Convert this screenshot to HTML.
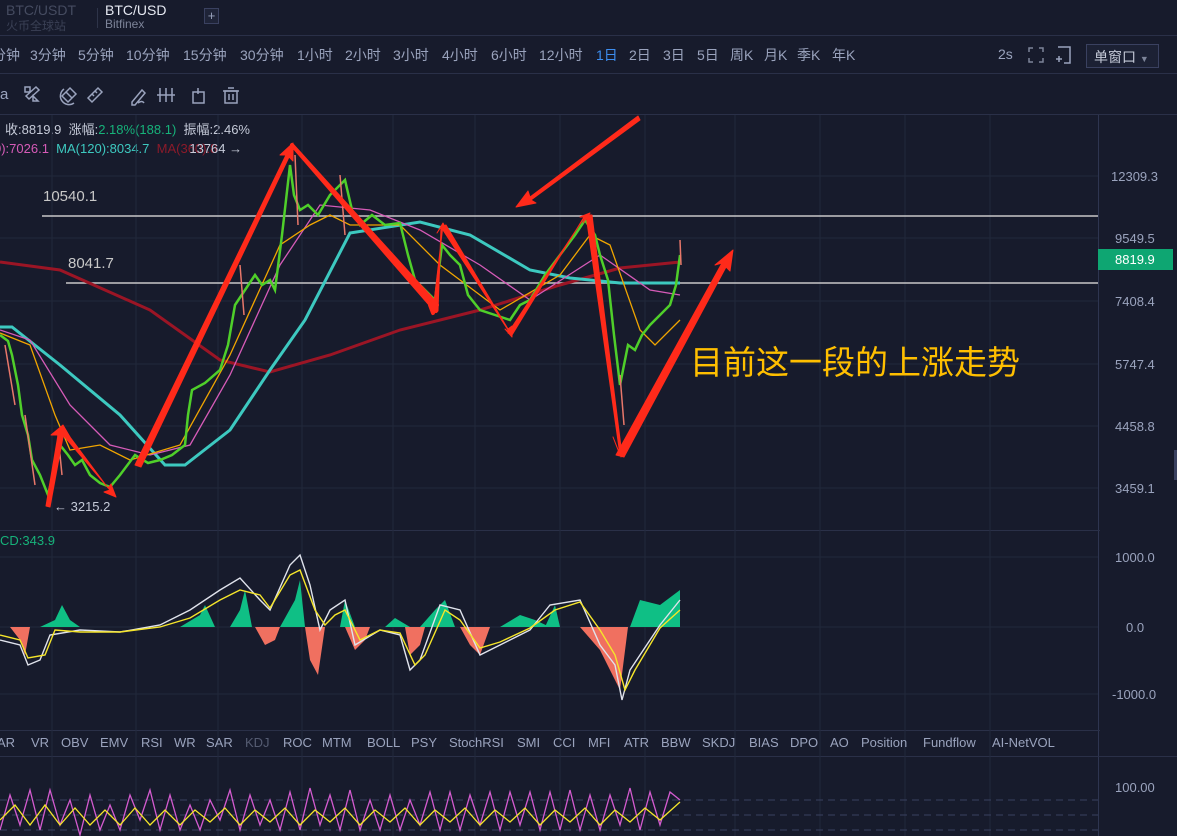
<!DOCTYPE html>
<html><head><meta charset="utf-8">
<style>
body{margin:0;width:1177px;height:836px;overflow:hidden;background:#171b2c;font-family:"Liberation Sans","Noto Sans CJK SC",sans-serif;color:#9aa3bd;position:relative}
.a{position:absolute;white-space:nowrap}
.hl{position:absolute;left:0;width:1177px;height:1px;background:#2a3048}
.p span{position:absolute;top:0;font-size:14px}
.t span{position:absolute;top:0;font-size:13px}
</style></head><body>
<div class="a" style="left:6px;top:2px;font-size:14px;color:#454b60">BTC/USDT</div>
<div class="a" style="left:6px;top:17px;font-size:12px;color:#3a4055">火币全球站</div>
<div class="a" style="left:97px;top:8px;width:1px;height:20px;background:#2e3449"></div>
<div class="a" style="left:105px;top:2px;font-size:14px;color:#e6e9f2">BTC/USD</div>
<div class="a" style="left:105px;top:17px;font-size:12px;color:#7d8499">Bitfinex</div>
<div class="a" style="left:204px;top:8px;width:13px;height:14px;border:1px solid #3a4160;background:#1f2438;color:#9aa3bd;font-size:13px;line-height:14px;text-align:center">+</div>
<div class="hl" style="top:35px"></div>
<div class="a p" style="left:0;top:45px;width:900px;height:20px">
<span style="left:-8px">分钟</span><span style="left:30px">3分钟</span><span style="left:78px">5分钟</span><span style="left:126px">10分钟</span><span style="left:183px">15分钟</span><span style="left:240px">30分钟</span><span style="left:297px">1小时</span><span style="left:345px">2小时</span><span style="left:393px">3小时</span><span style="left:442px">4小时</span><span style="left:491px">6小时</span><span style="left:539px">12小时</span><span style="left:596px;color:#3d8ef0">1日</span><span style="left:629px">2日</span><span style="left:663px">3日</span><span style="left:697px">5日</span><span style="left:730px">周K</span><span style="left:764px">月K</span><span style="left:797px">季K</span><span style="left:832px">年K</span></div>
<div class="a" style="left:998px;top:46px;font-size:14px">2s</div>
<svg class="a" style="left:1028px;top:47px" width="16" height="16" stroke="#7d8499" stroke-width="1.5" fill="none"><path d="M1 5V1h4M11 1h4v4M15 11v4h-4M5 15H1v-4"/></svg>
<svg class="a" style="left:1054px;top:46px" width="18" height="18" stroke="#9aa3bd" stroke-width="1.5" fill="none"><path d="M4 1h12v16H10M2 13h6M5 10v6"/></svg>
<div class="a" style="left:1086px;top:44px;width:73px;height:24px;border:1px solid #3a4160;background:#1c2134;font-size:14px;line-height:24px;color:#c5cad8;padding-left:7px;box-sizing:border-box">单窗口 <span style="font-size:9px;color:#7d8499">▼</span></div>
<div class="hl" style="top:73px"></div>
<div class="a" style="left:0;top:86px;font-size:15px;color:#9aa3bd">a</div>
<svg class="a" style="left:20px;top:84px" width="230" height="22" fill="none" stroke="#9aa3bd" stroke-width="1.5">
<path d="M5 3h5v5H5zM13 12l5 5h-5zM6 12l10-9 3 3-10 9z"/>
<path d="M42 12l8-8 6 6-8 8zM46 8l6 6M44 5a8 8 0 0 0 10 14"/>
<path d="M68 14l10-10 4 4-10 10zM72 10l2 2M75 7l2 2"/>
<path d="M112 18l10-12 3 3-10 12h-3z M118 19q4-3 6 0"/><path d="M140 4v14M146 4v14M152 4v14M137 11h18"/><rect x="173" y="8" width="11" height="11"/><path d="M178 4v6"/><rect x="205" y="7" width="12" height="12"/><path d="M203 7h16M208 4h6M209 10v6M213 10v6"/>
</svg>
<div class="hl" style="top:114px"></div>
<div class="a" style="left:5px;top:119px;font-size:13px;color:#c5cad8">收:8819.9&nbsp; 涨幅:<span style="color:#17b27a">2.18%(188.1)</span>&nbsp; 振幅:2.46%</div>
<div class="a" style="left:-6px;top:141px;font-size:13px"><span style="color:#d65bb8">0):7026.1</span>&nbsp; <span style="color:#3dc9c0">MA(120):8034.7</span>&nbsp; <span style="color:#8b1a2a">MA(360):8</span><span style="color:#c5cad8;margin-left:-28px">13764 →</span></div>
<div class="a" style="left:1098px;top:115px;width:1px;height:721px;background:#2e3550"></div>
<div class="hl" style="top:530px;width:1100px"></div>
<div class="hl" style="top:730px;width:1100px"></div>
<div class="hl" style="top:756px;width:1177px"></div>
<svg class="a" style="left:0;top:115px" width="1098" height="721">
<g stroke="#22283b" stroke-width="1">
<path d="M52 0V721M136 0V721M218 0V721M302 0V721M393 0V721M475 0V721M560 0V721M645 0V721M735 0V721M820 0V721M905 0V721M990 0V721"/>
<path d="M0 61H1098M0 123H1098M0 186H1098M0 249H1098M0 311H1098M0 373H1098M0 442H1098M0 512H1098M0 579H1098"/>
</g>
<path d="M42 101H1098M66 168H1098" stroke="#c8c8c8" stroke-width="1.5"/>
<path d="M0 147L60 155L150 195L220 245L270 257L330 240L400 215L480 195L560 170L620 153L680 147" stroke="#9b1525" stroke-width="3" fill="none"/>
<path d="M0 212L12 212L60 250L120 300L165 350L185 350L230 315L270 255L305 205L350 118L420 107L470 120L530 155L570 163L620 168L680 168" stroke="#3dc9c0" stroke-width="3" fill="none"/>
<path d="M0 215L30 225L70 290L110 330L150 340L190 330L230 260L280 150L320 90L370 95L420 115L480 150L530 185L600 140L650 175L680 180" stroke="#d65bb8" stroke-width="1.3" fill="none"/>
<path d="M0 218L30 230L55 300L70 335L100 330L130 345L180 330L230 240L280 130L310 110L330 100L350 110L400 110L440 150L500 195L560 160L590 120L610 130L640 215L655 230L680 205" stroke="#f0a500" stroke-width="1.3" fill="none"/>
<path d="M0 220L8 226L12 240L18 270L22 300L28 320L32 345L40 360L48 380L55 350L60 330L68 340L75 350L82 345L90 360L100 368L110 372L120 360L135 340L148 348L160 345L172 340L185 330L188 300L192 275L205 268L220 255L228 230L235 190L245 175L255 160L262 170L270 165L275 175L282 120L290 50L294 80L300 95L308 90L318 100L330 80L345 65L352 95L360 110L372 100L385 110L400 108L408 140L415 165L425 175L435 185L442 130L450 140L460 150L468 180L480 195L495 200L510 205L520 190L530 185L545 160L560 140L575 120L585 105L595 120L600 140L608 165L614 220L620 270L624 250L628 230L635 235L642 220L650 210L660 200L670 190L676 170L680 140" stroke="#4fcf2a" stroke-width="2.5" fill="none"/>
<path d="M5 230L15 290M25 300L35 370M58 320L62 360M240 150L244 200M295 40L298 110M340 60L345 120M620 260L624 310M680 125L681 150" stroke="#e8776a" stroke-width="1.5"/>
<g fill="#ff2a1a" stroke="#ff2a1a" stroke-linejoin="round">
<path d="M46 391L58 320L51 320L63 310L70 322L63 322L50 392Z"/>
<path d="M63 320L110 375L104 377L116 382L111 369L108 373L67 318Z"/>
<path d="M135 350L286 40L280 40L293 28L293 46L289 42L141 352Z"/>
<path d="M292 30L436 196L430 190L433 198L437 190Z" stroke-width="4"/>
<path d="M433 196L443 110L448 118L443 108L437 118L441 112L438 196Z"/>
<path d="M441 112L510 218L505 214L512 222L512 211L508 214L446 110Z"/>
<path d="M508 218L586 100L583 108L590 98L580 102L584 102L512 220Z"/>
<path d="M586 100L620 340L613 322L621 342L627 325L622 340L592 100Z"/>
<path d="M616 340L722 148L715 150L733 135L730 156L726 152L624 342Z"/>
<path d="M638 1L530 82L528 76L516 92L536 88L531 85L640 5Z"/>
</g>
</svg>
<div class="a" style="left:43px;top:188px;font-size:15px;color:#c8c8c8">10540.1</div>
<div class="a" style="left:68px;top:255px;font-size:15px;color:#c8c8c8">8041.7</div>
<div class="a" style="left:54px;top:499px;font-size:13px;color:#c5cad8">← 3215.2</div>
<div class="a" style="left:690px;top:336px;font-size:33px;color:#ffbf00">目前这一段的上涨走势</div>
<div class="a" style="left:1111px;top:169px;font-size:13px">12309.3</div>
<div class="a" style="left:1115px;top:231px;font-size:13px">9549.5</div>
<div class="a" style="left:1098px;top:249px;width:75px;height:21px;background:#0ea672;color:#fff;font-size:13px;line-height:21px;padding-left:17px;box-sizing:border-box">8819.9</div>
<div class="a" style="left:1115px;top:294px;font-size:13px">7408.4</div>
<div class="a" style="left:1115px;top:357px;font-size:13px">5747.4</div>
<div class="a" style="left:1115px;top:419px;font-size:13px">4458.8</div>
<div class="a" style="left:1115px;top:481px;font-size:13px">3459.1</div>
<div class="a" style="left:1115px;top:550px;font-size:13px">1000.0</div>
<div class="a" style="left:1126px;top:620px;font-size:13px">0.0</div>
<div class="a" style="left:1112px;top:687px;font-size:13px">-1000.0</div>
<div class="a" style="left:1115px;top:780px;font-size:13px">100.00</div>
<div class="a" style="left:1174px;top:450px;width:3px;height:30px;background:#3a4160"></div>
<div class="a" style="left:0;top:533px;font-size:13px;color:#17b27a">CD:343.9</div>
<svg class="a" style="left:0;top:530px" width="1098" height="306">
<g fill="#0fbf85">
<path d="M40 97L55 90L62 75L70 90L80 97Z M180 97L200 85L205 75L215 97Z M230 97L240 80L245 60L252 97Z M280 97L295 70L300 50L305 97Z M340 97L345 70L355 97Z M385 97L395 88L410 97Z M420 97L435 80L445 70L455 97Z M500 97L520 85L535 90L550 97Z M545 97L555 75L560 97Z M630 97L640 70L660 75L680 60L680 97Z"/>
</g>
<g fill="#f07060">
<path d="M10 97L20 110L25 125L30 97Z M255 97L265 115L275 110L280 97Z M305 97L310 130L318 145L325 97Z M345 97L355 120L365 110L370 97Z M405 97L410 125L420 115L425 97Z M460 97L470 115L480 125L490 97Z M580 97L600 120L610 140L620 160L628 97Z"/>
</g>
<path d="M0 110L20 115L28 135L40 130L50 105L80 100L120 102L160 95L190 80L220 60L240 48L260 70L270 80L290 35L300 25L310 55L320 100L330 80L345 70L355 115L380 100L400 105L410 140L420 130L440 75L460 80L480 125L500 115L530 100L550 75L580 70L600 115L615 135L622 170L630 140L660 95L680 70" stroke="#e0e3ec" stroke-width="1.4" fill="none"/>
<path d="M0 105L20 110L28 128L45 125L55 100L80 102L120 102L160 97L190 88L220 70L240 60L260 65L270 78L290 45L300 40L315 80L325 95L335 85L345 80L360 110L380 100L400 103L415 135L425 125L445 80L460 90L480 118L500 112L530 98L555 80L580 72L600 100L615 125L625 160L635 140L660 98L680 80" stroke="#f5e52a" stroke-width="1.4" fill="none"/>
<g stroke="#3a4160" stroke-dasharray="7 5"><path d="M0 270H1098M0 285H1098M0 300H1098"/></g>
<path d="M0 300L10 265L20 295L30 260L40 300L50 260L60 295L70 270L80 305L90 265L100 300L110 275L120 300L130 265L140 290L150 260L160 300L170 265L180 300L190 275L200 300L210 270L220 290L230 260L240 300L250 265L260 295L270 270L280 300L290 262L300 300L310 258L320 295L330 265L340 300L350 260L360 300L370 270L380 300L390 265L400 300L410 270L420 295L430 262L440 300L450 262L460 300L470 265L480 295L490 262L500 300L510 262L520 295L530 262L540 300L550 262L560 300L570 260L580 300L590 265L600 300L610 265L620 295L630 258L640 300L650 262L660 295L670 262L680 270" stroke="#d45bd0" stroke-width="1.3" fill="none"/>
<path d="M0 290L15 275L30 295L45 275L60 295L75 278L90 295L105 280L120 295L135 278L150 295L165 280L180 295L195 280L210 292L225 278L240 295L255 280L270 292L285 278L300 295L315 280L330 292L345 278L360 295L375 280L390 292L405 278L420 295L435 280L450 292L465 278L480 295L495 280L510 292L525 278L540 295L555 280L570 292L585 278L600 295L615 280L630 292L645 278L660 290L680 272" stroke="#f5e52a" stroke-width="1.3" fill="none"/>
</svg>
<div class="a t" style="left:0;top:735px;width:1100px;height:18px">
<span style="left:-3px">AR</span><span style="left:31px">VR</span><span style="left:61px">OBV</span><span style="left:100px">EMV</span><span style="left:141px">RSI</span><span style="left:174px">WR</span><span style="left:206px">SAR</span><span style="left:245px;color:#555c72">KDJ</span><span style="left:283px">ROC</span><span style="left:322px">MTM</span><span style="left:367px">BOLL</span><span style="left:411px">PSY</span><span style="left:449px">StochRSI</span><span style="left:517px">SMI</span><span style="left:553px">CCI</span><span style="left:588px">MFI</span><span style="left:624px">ATR</span><span style="left:661px">BBW</span><span style="left:702px">SKDJ</span><span style="left:749px">BIAS</span><span style="left:790px">DPO</span><span style="left:830px">AO</span><span style="left:861px">Position</span><span style="left:923px">Fundflow</span><span style="left:992px">AI-NetVOL</span></div>
</body></html>
